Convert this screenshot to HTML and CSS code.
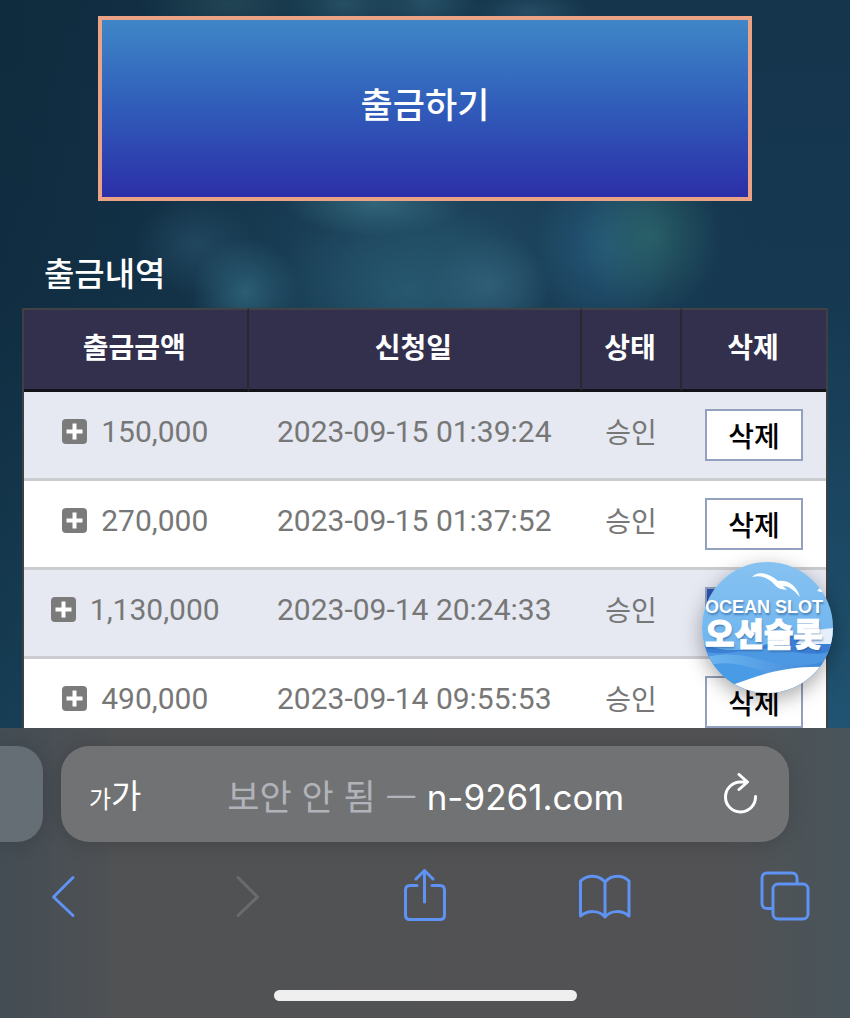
FILE: index.html
```html
<!DOCTYPE html>
<html lang="ko">
<head>
    <meta charset="UTF-8">
    <meta name="viewport" content="width=device-width, initial-scale=1.0">
    <title>출금내역</title>
    <link rel="stylesheet" href="styles.css">
</head>
<body>
    <main class="page">
        <button type="button" class="withdraw-btn">출금하기</button>

        <h2 class="section-title">출금내역</h2>
        <table class="history">
            <colgroup>
                <col class="col-amount">
                <col class="col-date">
                <col class="col-status">
                <col class="col-delete">
            </colgroup>
            <thead>
                <tr>
                    <th>출금금액</th>
                    <th>신청일</th>
                    <th>상태</th>
                    <th>삭제</th>
                </tr>
            </thead>
            <tbody>
                <tr>
                    <td><span class="amount"><svg class="plus" viewBox="0 0 25 25"><rect width="25" height="25" rx="4"/><path d="M12.5 4.5v16M4.5 12.5h16"/></svg>150,000</span></td>
                    <td>2023-09-15 01:39:24</td>
                    <td class="status">승인</td>
                    <td class="action"><button type="button" class="delete-btn">삭제</button></td>
                </tr>
                <tr>
                    <td><span class="amount"><svg class="plus" viewBox="0 0 25 25"><rect width="25" height="25" rx="4"/><path d="M12.5 4.5v16M4.5 12.5h16"/></svg>270,000</span></td>
                    <td>2023-09-15 01:37:52</td>
                    <td class="status">승인</td>
                    <td class="action"><button type="button" class="delete-btn">삭제</button></td>
                </tr>
                <tr>
                    <td><span class="amount"><svg class="plus" viewBox="0 0 25 25"><rect width="25" height="25" rx="4"/><path d="M12.5 4.5v16M4.5 12.5h16"/></svg>1,130,000</span></td>
                    <td>2023-09-14 20:24:33</td>
                    <td class="status">승인</td>
                    <td class="action"><button type="button" class="delete-btn active" aria-label="삭제"></button></td>
                </tr>
                <tr>
                    <td><span class="amount"><svg class="plus" viewBox="0 0 25 25"><rect width="25" height="25" rx="4"/><path d="M12.5 4.5v16M4.5 12.5h16"/></svg>490,000</span></td>
                    <td>2023-09-14 09:55:53</td>
                    <td class="status">승인</td>
                    <td class="action"><button type="button" class="delete-btn">삭제</button></td>
                </tr>
            </tbody>
        </table>

        <!-- floating logo -->
        <a href="#" class="badge">
            <svg class="badge-art" viewBox="0 0 131 131">
                <defs>
                    <linearGradient id="sky" x1="0" y1="0" x2="0" y2="1">
                        <stop offset="0" stop-color="#86c2f1"/>
                        <stop offset="1" stop-color="#64aeed"/>
                    </linearGradient>
                    <linearGradient id="wave" x1="0" y1="0" x2="1" y2="0">
                        <stop offset="0" stop-color="#6db8f0"/>
                        <stop offset="1" stop-color="#3c83d8"/>
                    </linearGradient>
                </defs>
                <rect width="131" height="131" fill="url(#sky)"/>
                <path d="M0 82C30 94 58 86 82 76C100 68 114 70 131 66V131H0Z" fill="#3b7fd5"/>
                <path d="M94 82C104 70 116 67 131 66V82Z" fill="#e4effb"/>
                <path d="M0 89C28 96 46 84 72 87C96 90 110 95 131 89V131H0Z" fill="#4d98e3"/>
                <path d="M0 96C30 88 48 95 72 101C96 106 114 102 131 97V131H0Z" fill="url(#wave)"/>
                <path d="M0 106C24 96 44 104 66 111L40 131H0Z" fill="#4a9be6"/>
                <path d="M30 123C58 113 82 103 131 105V131H30Z" fill="#fff"/>
                <path d="M50 15C55 9 66 10 76 19C85 18 94 22 98 35C91 27 86 24 81 24L85 28L79 27C75 26 73 23 70 20C64 15 58 13 50 15Z" fill="#fff"/>
                <path d="M115 29L119 25L124 31Z" fill="#fff"/>
            </svg>
            <span class="badge-en">OCEAN SLOT</span>
            <span class="badge-ko">오션슬롯</span>
        </a>
    </main>

    <footer class="browser">
        <div class="tabs">
            <div class="prev-tab"></div>
            <div class="address">
                <button type="button" class="text-size"><small>가</small>가</button>
                <button type="button" class="url"><span>보안 안 됨 —</span> n-9261.com</button>
                <button type="button" class="reload" aria-label="새로고침">
                    <svg viewBox="0 0 36 42"><path d="M33.5 23.5A15 15 0 1 1 18.5 9H24M17 1.5L25.5 9L17 16.5"/></svg>
                </button>
            </div>
        </div>
        <nav class="toolbar">
            <button type="button" aria-label="뒤로">
                <svg viewBox="0 0 54 54"><path d="M38 8.5L18.5 28L38 46.5"/></svg>
            </button>
            <button type="button" aria-label="앞으로" disabled>
                <svg viewBox="0 0 54 54"><path d="M22 8.5L41.5 28L22 46.5"/></svg>
            </button>
            <button type="button" aria-label="공유">
                <svg viewBox="0 0 54 54"><path d="M21 16.5H14C11 16.5 9.5 18 9.5 21V46C9.5 49 11 50.5 14 50.5H44C47 50.5 48.5 49 48.5 46V21C48.5 18 47 16.5 44 16.5H36M28.5 33V2M20 10L28.5 1.5L37 10"/></svg>
            </button>
            <button type="button" aria-label="책갈피">
                <svg viewBox="0 0 54 54"><path d="M28 13C21 5 10 6 3.5 12V47C11 41 22 41 28 48C34 41 45 41 52 47V12C46 6 35 5 28 13V48"/></svg>
            </button>
            <button type="button" aria-label="탭">
                <svg viewBox="0 0 54 54"><path d="M15 39.5H10C7 39.5 5 37.5 5 34.5V9C5 6 7 4 10 4H35C38 4 40 6 40 9V14"/><rect x="16" y="15" width="35" height="35" rx="5"/></svg>
            </button>
        </nav>
        <div class="home-bar"></div>
    </footer>
</body>
</html>
```
FILE: styles.css
```css
* {
    box-sizing: border-box;
}
body {
    display: flex;
    flex-direction: column;
    height: 100vh;
    margin: 0;
    overflow: hidden;
    font-family: Roboto, 'Noto Sans CJK KR', sans-serif;
    background-color: #163a53;
}
button {
    padding: 0;
    border: none;
    background: none;
    font-family: inherit;
    cursor: pointer;
}
svg {
    display: block;
    fill: none;
}

/* page */
.page {
    position: relative;
    flex: 1;
    min-height: 0;
    overflow: hidden;
    padding: 16px 22px 0;
    background:
        radial-gradient(ellipse 70px 80px at 650px 235px, rgba(46, 106, 106, 0.7), transparent),
        radial-gradient(ellipse 70px 90px at 605px 245px, rgba(40, 96, 134, 0.7), transparent),
        radial-gradient(ellipse 60px 50px at 490px 285px, rgba(56, 106, 130, 0.6), transparent),
        radial-gradient(ellipse 54px 54px at 245px 292px, rgba(52, 110, 132, 0.7), transparent),
        radial-gradient(ellipse 60px 50px at 195px 245px, rgba(44, 88, 114, 0.5), transparent),
        radial-gradient(ellipse 90px 34px at 375px 202px, rgba(60, 118, 136, 0.7), transparent),
        radial-gradient(ellipse 140px 90px at 410px 290px, rgba(44, 98, 120, 0.7), transparent),
        radial-gradient(ellipse 300px 130px at 450px 240px, rgba(34, 78, 102, 0.7), transparent),
        radial-gradient(ellipse 90px 34px at 230px 4px, rgba(44, 82, 94, 0.6), transparent),
        radial-gradient(ellipse 60px 34px at 345px 4px, rgba(46, 92, 110, 0.7), transparent),
        radial-gradient(ellipse 60px 34px at 425px 2px, rgba(50, 98, 118, 0.6), transparent),
        radial-gradient(ellipse 60px 24px at 530px 12px, rgba(50, 92, 114, 0.6), transparent),
        linear-gradient(to right, rgba(8, 28, 40, 0.4), transparent 50%),
        linear-gradient(#14354c, #163851 40%, #205472);
}
.withdraw-btn {
    display: block;
    width: calc(100% - 152px);
    height: 185px;
    margin: 0 auto;
    padding-bottom: 12px;
    border: 4px solid #eba285;
    background: linear-gradient(#3f86c7, #3160bb 45%, #2c2fa8);
    color: #fff;
    font-size: 35px;
    font-weight: 500;
}
.section-title {
    margin: 50px 22px 9px;
    color: #fff;
    font-size: 33px;
    line-height: 48px;
    font-weight: 500;
}
.history {
    width: 100%;
    table-layout: fixed;
    border-spacing: 0;
    border-left: 2px solid #3e4044;
    border-right: 2px solid #3e4044;
    text-align: center;
    color: #777;
    font-size: 30px;
}
.col-amount {
    width: 28%;
}
.col-status {
    width: 100px;
}
.col-delete {
    width: 144px;
}
.history th {
    height: 84px;
    padding: 0 2px 8px 0;
    border-top: 2px solid #424145;
    border-bottom: 3px solid #141219;
    border-right: 2px solid #29282c;
    background: #32304c;
    color: #fff;
    font-size: 28px;
}
.history th:last-child {
    border-right: none;
}
.history td {
    height: 89px;
    padding: 0 2px 8px 0;
    border-bottom: 3px solid #cbccd0;
    background: #fff;
    white-space: nowrap;
}
.history tr:nth-child(odd) td {
    background: #e6e9f2;
}
.history .status {
    font-size: 28px;
}
.history .action {
    padding: 0;
}
.amount {
    display: flex;
    align-items: center;
    justify-content: center;
    gap: 14px;
}
.plus {
    width: 25px;
    height: 25px;
}
.plus rect {
    fill: #7b7b7b;
}
.plus path {
    stroke: #fff;
    stroke-width: 4;
}
.delete-btn {
    display: block;
    width: 98px;
    height: 52px;
    margin: 0 auto;
    border: 2px solid #94a1be;
    background: #fff;
    color: #000;
    font-size: 28px;
    font-weight: 500;
}
.delete-btn.active {
    background: #2d55b5;
}

/* floating logo */
.badge {
    position: absolute;
    right: 17px;
    bottom: 35px;
    width: 131px;
    height: 131px;
    padding-top: 35px;
    border-radius: 50%;
    overflow: hidden;
    box-shadow: 0 6px 20px rgba(0, 0, 0, 0.35);
    color: #fff;
    text-decoration: none;
    text-shadow: 1px 2px 2px rgba(40, 90, 150, 0.6);
    white-space: nowrap;
}
.badge-art {
    position: absolute;
    inset: 0;
}
.badge-en,
.badge-ko {
    position: relative;
    display: block;
    padding-left: 3px;
}
.badge-en {
    font-family: 'Liberation Sans', sans-serif;
    font-size: 18px;
    line-height: 20px;
    font-weight: 700;
}
.badge-ko {
    font-family: 'Noto Sans CJK KR', sans-serif;
    font-size: 32px;
    line-height: 30px;
    font-weight: 900;
    -webkit-text-stroke: 1px #fff;
}

/* browser bar */
.browser {
    height: 290px;
    padding-top: 18px;
    background: linear-gradient(to right, #434d54, #515254 15%, #525254 85%, #48545a);
}
.tabs {
    display: flex;
    gap: 18px;
    height: 96px;
    padding-right: 61px;
}
.prev-tab {
    width: 43px;
    border-radius: 0 26px 26px 0;
    background: #656e74;
    box-shadow: 0 2px 20px rgba(0, 0, 0, 0.15);
}
.address {
    flex: 1;
    display: flex;
    align-items: center;
    justify-content: space-between;
    padding: 0 31px 0 28px;
    border-radius: 28px;
    background: #717274;
    box-shadow: 0 2px 20px rgba(0, 0, 0, 0.15);
}
.address button {
    color: #fff;
}
.text-size {
    font-size: 33px;
}
.text-size small {
    font-size: 24px;
}
.url {
    padding: 0 12px 0 0;
    font-family: Inter, 'Noto Sans CJK KR', sans-serif;
    font-size: 35px;
    white-space: nowrap;
}
.address .url {
    padding-right: 12px;
}
.url span {
    color: #b2b3ba;
    font-family: 'Noto Sans CJK KR', sans-serif;
    font-size: 35px;
}
.reload svg {
    width: 36px;
    height: 42px;
    stroke: #fff;
    stroke-width: 3;
    stroke-linecap: round;
    stroke-linejoin: round;
}
.toolbar {
    display: flex;
    justify-content: space-between;
    margin-top: 27px;
    padding: 0 39px 0 35px;
}
.toolbar svg {
    width: 54px;
    height: 54px;
    stroke: #5e92f3;
    stroke-width: 3;
    stroke-linecap: round;
    stroke-linejoin: round;
}
.toolbar button:disabled svg {
    stroke: #6b6b6d;
}
.home-bar {
    width: 303px;
    height: 11px;
    margin: 67px auto 0;
    border-radius: 6px;
    background: #efeff0;
}
```
